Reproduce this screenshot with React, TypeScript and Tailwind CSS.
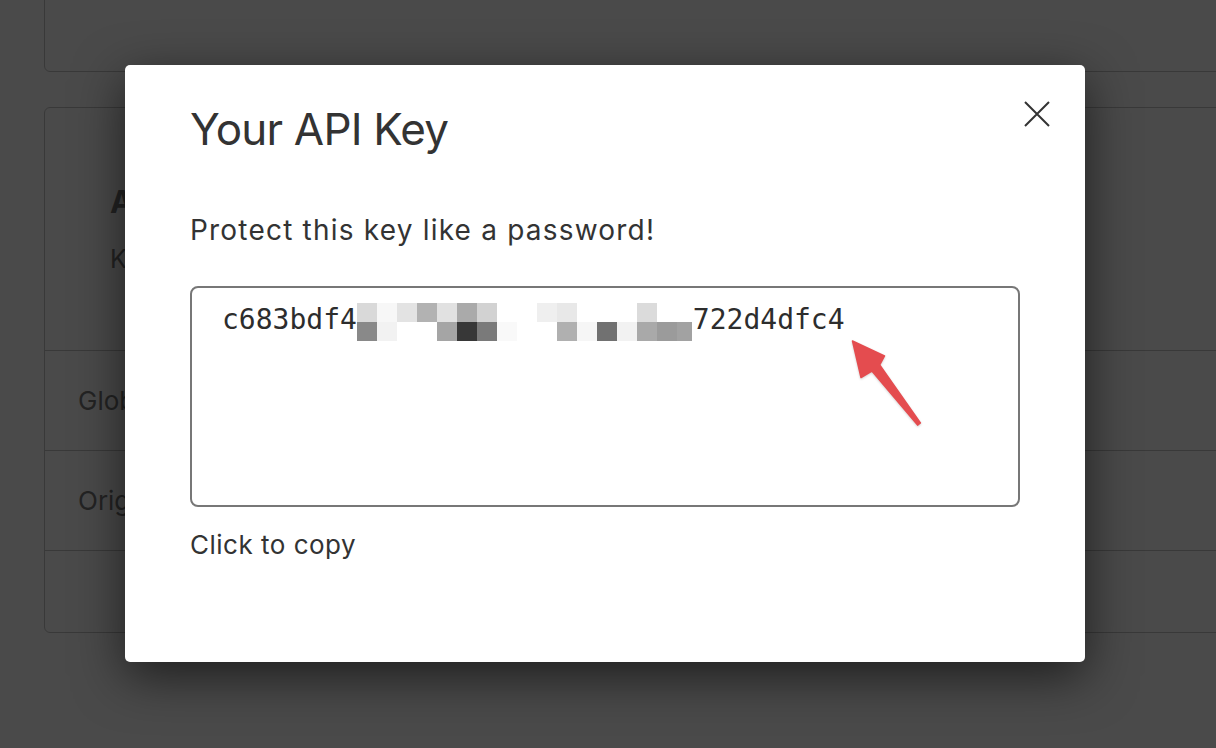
import React from "react";

// greyscale cells of the blurred middle of the key (top row, bottom row)
const topRow = [
  "#d9d9d9", "#f7f7f7", "#e3e3e3", "#b2b2b2", "#e1e1e1", "#aaaaaa", "#d2d2d2", "#ffffff", "#ffffff",
  "#efefef", "#e8e8e8", "#ffffff", "#ffffff", "#ffffff", "#dbdbdb", "#ffffff", "#ffffff",
];
const bottomRow = [
  "#898989", "#f2f2f2", "#ffffff", "#ffffff", "#a5a5a5", "#373737", "#7a7a7a", "#f9f9f9", "#ffffff",
  "#ffffff", "#b0b0b0", "#f6f6f6", "#717171", "#f2f2f2", "#a9a9a9", "#9b9b9b", "#a2a2a2",
];

const KeyMosaic = () => (
  <div className="grid grid-cols-[repeat(16,20px)_15px] grid-rows-[19px_19px] shrink-0">
    {[...topRow, ...bottomRow].map((c, i) => (
      <div key={i} style={{ backgroundColor: c }} />
    ))}
  </div>
);

const CloseIcon = () => (
  <svg width="26" height="26" viewBox="0 0 26 26" fill="none" stroke="#333" strokeWidth="2">
    <path d="M1 1 L25 25 M25 1 L1 25" />
  </svg>
);

const Arrow = () => (
  <svg
    className="absolute left-[840px] top-[330px] w-[90px] h-[100px] drop-shadow-[0_1px_1px_rgba(0,0,0,0.18)]"
    viewBox="840 330 90 100"
  >
    <path
      d="M852.5 341 L884.5 356 L879.7 364.9 L920.4 422.9 L917.6 425.1 L871.9 371.1 L861 377.5 Z"
      fill="#e44c4f"
      stroke="#e44c4f"
      strokeWidth="1.5"
      strokeLinejoin="round"
    />
  </svg>
);

export default function App() {
  return (
    <div className="relative w-[1216px] h-[748px] overflow-hidden bg-white font-['Inter','Noto_Sans',sans-serif]">
      {/* page behind the dialog */}
      <div className="flex flex-col pl-[44px] text-[#7a7a7a]">
        <div className="mt-[-40px] h-[112px] w-[1220px] rounded-md border border-[#c4c4c4]" />
        <div className="mt-[35px] h-[526px] w-[1220px] rounded-md border border-[#c4c4c4] flex flex-col">
          <div className="h-[243px] pl-[65px] pt-[74px] border-b border-[#c4c4c4]">
            <div className="text-[31px] font-bold leading-[40px]">API Keys</div>
            <div className="mt-[22px] text-[25px] leading-[30px]">Keys allow access to the API</div>
          </div>
          <div className="h-[100px] flex items-center pl-[33px] text-[26px] border-b border-[#c4c4c4]">Global settings</div>
          <div className="h-[100px] flex items-center pl-[33px] text-[26px] border-b border-[#c4c4c4]">Origins</div>
          <div className="flex-1" />
        </div>
      </div>

      {/* overlay */}
      <div className="absolute inset-0 bg-black/[0.71]" />

      {/* dialog */}
      <div className="absolute left-[125px] top-[65px] w-[960px] h-[597px] rounded-[5px] bg-white shadow-[0_14px_50px_rgba(0,0,0,0.6)] pl-[65px] pr-[65px] pt-[38px] text-[#333]">
        <div className="flex items-start justify-between">
          <h2 className="text-[44px] leading-[52px] tracking-[-0.8px]">Your API Key</h2>
          <button className="mt-[-2px] mr-[-30px] p-0">
            <CloseIcon />
          </button>
        </div>
        <p className="mt-[58px] text-[28px] leading-[34px] tracking-[1.2px]">Protect this key like a password!</p>
        <div className="mt-[39px] w-[830px] h-[221px] rounded-lg border-2 border-[#777] pl-[30px] pt-[15px]">
          <div className="flex items-start font-['DejaVu_Sans_Mono',monospace] text-[28px] leading-[33px] text-[#2d2d2d]">
            <span>c683bdf4</span>
            <KeyMosaic />
            <span className="ml-[1px]">722d4dfc4</span>
          </div>
        </div>
        <p className="mt-[22px] text-[26px] leading-[32px] tracking-[0.5px]">Click to copy</p>
      </div>

      <Arrow />
    </div>
  );
}
